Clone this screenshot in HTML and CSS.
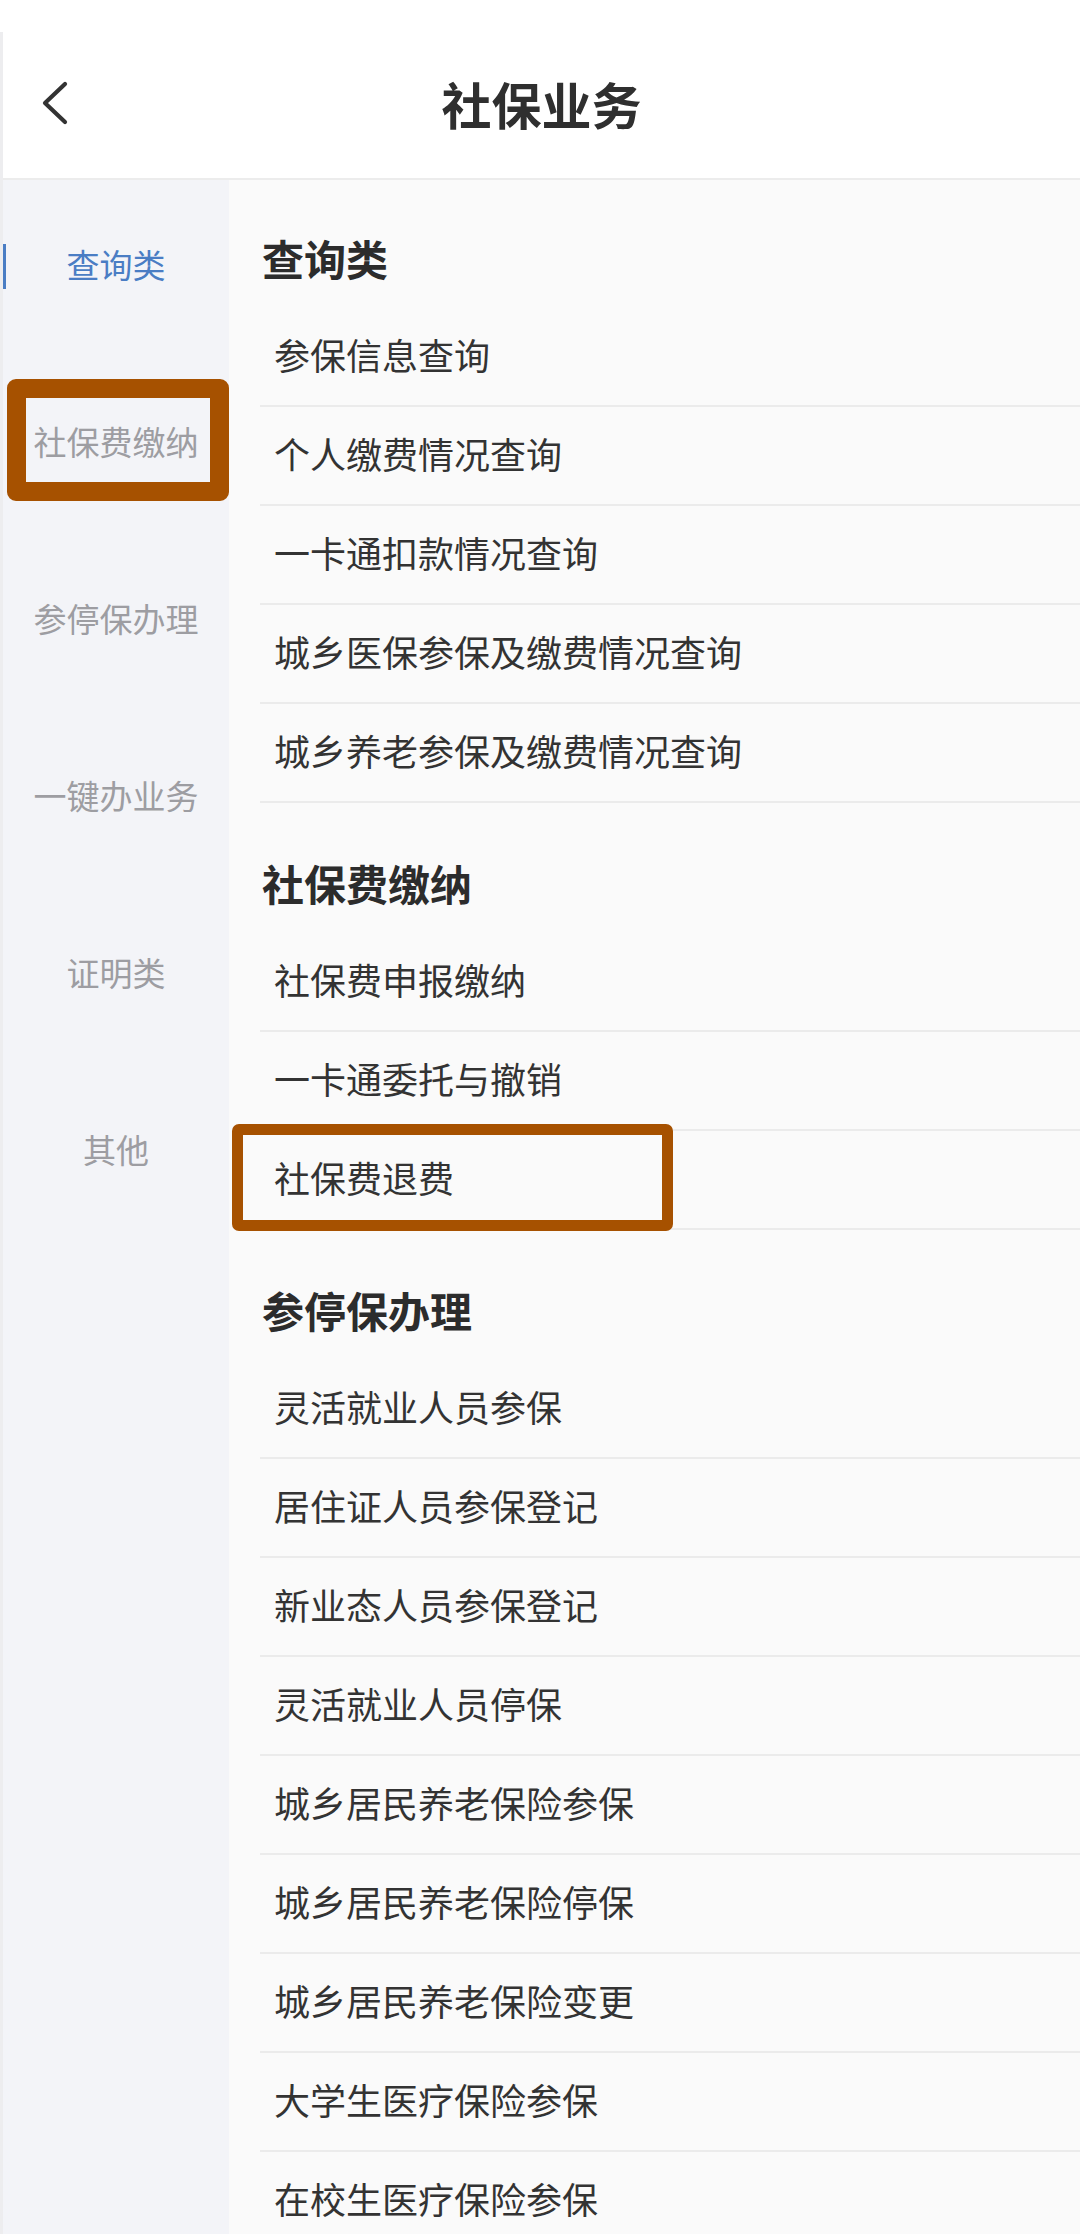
FILE: index.html
```html
<!DOCTYPE html>
<html lang="zh-CN">
<head>
<meta charset="utf-8">
<title>社保业务</title>
<link rel="stylesheet" href="styles.css">
</head>
<body>
<div class="app">
  <header class="header">
    <div class="back">
      <svg width="30" height="44" viewBox="0 0 30 44" aria-hidden="true">
        <polyline points="24,3 4,22 24,41" fill="none" stroke="#333" stroke-width="4.2" stroke-linecap="round" stroke-linejoin="round"/>
      </svg>
    </div>
    <h1 class="title">社保业务</h1>
    <div class="spacer"></div>
  </header>
  <div class="body">
    <nav class="sidebar">
      <div class="side-item active">查询类</div>
      <div class="side-item">社保费缴纳<span class="mark mark-side"></span></div>
      <div class="side-item">参停保办理</div>
      <div class="side-item">一键办业务</div>
      <div class="side-item">证明类</div>
      <div class="side-item">其他</div>
    </nav>
    <main class="content">
      <section class="section">
        <h2 class="section-title">查询类</h2>
        <div class="row">参保信息查询</div>
        <div class="row">个人缴费情况查询</div>
        <div class="row">一卡通扣款情况查询</div>
        <div class="row">城乡医保参保及缴费情况查询</div>
        <div class="row">城乡养老参保及缴费情况查询</div>
      </section>
      <section class="section">
        <h2 class="section-title">社保费缴纳</h2>
        <div class="row">社保费申报缴纳</div>
        <div class="row">一卡通委托与撤销</div>
        <div class="row">社保费退费<span class="mark mark-row"></span></div>
      </section>
      <section class="section">
        <h2 class="section-title">参停保办理</h2>
        <div class="row">灵活就业人员参保</div>
        <div class="row">居住证人员参保登记</div>
        <div class="row">新业态人员参保登记</div>
        <div class="row">灵活就业人员停保</div>
        <div class="row">城乡居民养老保险参保</div>
        <div class="row">城乡居民养老保险停保</div>
        <div class="row">城乡居民养老保险变更</div>
        <div class="row">大学生医疗保险参保</div>
        <div class="row">在校生医疗保险参保</div>
      </section>
    </main>
  </div>
</div>
</body>
</html>
```

FILE: styles.css
```css
* {
  box-sizing: border-box;
}

html, body {
  margin: 0;
  padding: 0;
  background: #ffffff;
}

body {
  font-family: "Noto Sans CJK SC", "Noto Sans", sans-serif;
  color: #333333;
  height: 2234px;
  overflow: hidden;
}

.app {
  margin-top: 32px;
  border-left: 3px solid #ededef;
  min-height: 2202px;
  display: flex;
  flex-direction: column;
}

.header {
  height: 148px;
  padding-bottom: 4px;
  background: #ffffff;
  border-bottom: 2px solid #ececec;
  display: grid;
  grid-template-columns: 1fr auto 1fr;
  align-items: center;
}

.back {
  padding-left: 38px;
  display: flex;
  align-items: center;
}

.back svg {
  display: block;
}

.title {
  margin: 0;
  font-size: 50px;
  line-height: 50px;
  font-weight: 700;
  color: #2f2f2f;
  letter-spacing: 0;
}

.body {
  flex: 1;
  display: flex;
}

.sidebar {
  width: 226px;
  flex: 0 0 226px;
  background: #f3f4f8;
}

.side-item {
  position: relative;
  text-align: center;
  font-size: 33px;
  line-height: 33px;
  padding: 68px 0 76px;
  color: #9d9da2;
  white-space: nowrap;
}

.side-item.active {
  color: #4a7dc4;
}

.side-item.active::before {
  content: "";
  position: absolute;
  left: 0;
  top: 64px;
  width: 3px;
  height: 45px;
  background: #4a7dc4;
}

.mark {
  position: absolute;
  border-style: solid;
  border-color: #a65100;
  pointer-events: none;
}

.mark-side {
  top: 22px;
  left: 4px;
  width: 222px;
  height: 122px;
  border-width: 19px;
  border-radius: 9px;
}

.mark-row {
  top: -7px;
  left: -28px;
  width: 441px;
  height: 107px;
  border-width: 11px;
  border-radius: 7px;
}

.content {
  flex: 1;
  background: #fafafa;
  padding-left: 31px;
}

.section-title {
  margin: 0;
  padding: 59px 0 29px 2px;
  font-size: 42px;
  line-height: 42px;
  font-weight: 700;
  color: #2c2c2c;
}

.section:first-child .section-title {
  padding-top: 57px;
  padding-bottom: 29px;
}

.row {
  position: relative;
  height: 99px;
  padding-left: 14px;
  border-bottom: 2px solid #ebebeb;
  font-size: 36px;
  line-height: 93px;
  color: #333333;
  white-space: nowrap;
}
```
